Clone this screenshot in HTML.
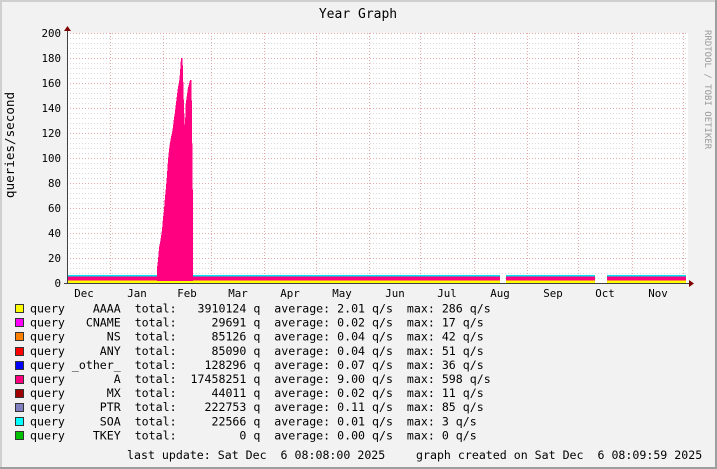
<!DOCTYPE html>
<html><head><meta charset="utf-8"><style>
html,body{margin:0;padding:0;background:#f2f2f2}
svg{display:block}
text{font-family:"DejaVu Sans Mono","Liberation Mono",monospace}
.pre{white-space:pre}
</style></head><body>
<svg width="717" height="469" viewBox="0 0 717 469" xmlns="http://www.w3.org/2000/svg">
<rect x="0" y="0" width="717" height="469" fill="#f2f2f2"/>
<rect x="0" y="0" width="717" height="2" fill="#cfcfcf"/>
<rect x="0" y="0" width="2" height="469" fill="#cfcfcf"/>
<rect x="0" y="467" width="717" height="2" fill="#9e9e9e"/>
<rect x="715" y="0" width="2" height="469" fill="#9e9e9e"/>
<rect x="67" y="33" width="621" height="250" fill="#ffffff"/>
<g stroke="#d8d8d8" stroke-width="1" stroke-dasharray="1,2" shape-rendering="crispEdges">
<path d="M67 38.5H688M67 43.5H688M67 48.5H688M67 53.5H688M67 63.5H688M67 68.5H688M67 73.5H688M67 78.5H688M67 88.5H688M67 93.5H688M67 98.5H688M67 103.5H688M67 113.5H688M67 118.5H688M67 123.5H688M67 128.5H688M67 138.5H688M67 143.5H688M67 148.5H688M67 153.5H688M67 163.5H688M67 168.5H688M67 173.5H688M67 178.5H688M67 188.5H688M67 193.5H688M67 198.5H688M67 203.5H688M67 213.5H688M67 218.5H688M67 223.5H688M67 228.5H688M67 238.5H688M67 243.5H688M67 248.5H688M67 253.5H688M67 263.5H688M67 268.5H688M67 273.5H688M67 278.5H688"/>
</g>
<g stroke="#e3a8a8" stroke-width="1" stroke-dasharray="1,2" shape-rendering="crispEdges">
<path d="M67 33.5H688M67 58.5H688M67 83.5H688M67 108.5H688M67 133.5H688M67 158.5H688M67 183.5H688M67 208.5H688M67 233.5H688M67 258.5H688"/>
<path d="M110.5 33V283M163.5 33V283M211.5 33V283M264.5 33V283M316.5 33V283M369.5 33V283M420.5 33V283M474.5 33V283M527.5 33V283M578.5 33V283M632.5 33V283M683.5 33V283"/>
</g>
<g shape-rendering="crispEdges">
<rect x="67" y="275" width="433" height="2" fill="#00e5ee"/>
<rect x="67" y="276.5" width="433" height="5" fill="#ff0080"/>
<rect x="67" y="280.5" width="433" height="2.5" fill="#ffff00"/>
<rect x="506" y="275" width="89" height="2" fill="#00e5ee"/>
<rect x="506" y="276.5" width="89" height="5" fill="#ff0080"/>
<rect x="506" y="280.5" width="89" height="2.5" fill="#ffff00"/>
<rect x="607" y="275" width="79" height="2" fill="#00e5ee"/>
<rect x="607" y="276.5" width="79" height="5" fill="#ff0080"/>
<rect x="607" y="280.5" width="79" height="2.5" fill="#ffff00"/>
<rect x="184" y="274" width="1.5" height="7" fill="#ffff00"/>
</g>
<polygon fill="#ff0080" shape-rendering="crispEdges" points="157,281 157,268 158,260 159,248 160,243 161,237 162,230 163,218 164,210 165,197 166,187 167,175 168,160 169,150 170,143 171,137 172,133 173,127 174,118 175,112 176,103 178,87 179,83 180,73 181,58 182.5,58 183,73 184,108 185,130 185.5,105 187,95 188,88 190,80 191.5,80 192,120 193,212 193,281"/>
<path d="M67.5 283V30M64 283.5H690" stroke="#404040" stroke-width="1" shape-rendering="crispEdges"/>
<polygon points="64,31 71,31 67.5,26" fill="#800000"/>
<polygon points="689,280 689,287 694,283.5" fill="#800000"/>
<g font-size="10.8" fill="#000" text-anchor="end">
<text x="61" y="37">200</text><text x="61" y="62">180</text><text x="61" y="87">160</text><text x="61" y="112">140</text><text x="61" y="137">120</text><text x="61" y="162">100</text><text x="61" y="187">80</text><text x="61" y="212">60</text><text x="61" y="237">40</text><text x="61" y="262">20</text><text x="61" y="287">0</text>
</g>
<g font-size="10.8" fill="#000" text-anchor="middle">
<text x="84" y="297">Dec</text><text x="137" y="297">Jan</text><text x="187" y="297">Feb</text><text x="238" y="297">Mar</text><text x="290" y="297">Apr</text><text x="342" y="297">May</text><text x="395" y="297">Jun</text><text x="447" y="297">Jul</text><text x="500" y="297">Aug</text><text x="553" y="297">Sep</text><text x="605" y="297">Oct</text><text x="658" y="297">Nov</text>
</g>
<text x="358" y="18" font-size="13" text-anchor="middle" fill="#000">Year Graph</text>
<text transform="translate(14,145) rotate(-90)" font-size="12.6" text-anchor="middle" fill="#000">queries/second</text>
<text transform="translate(705,30) rotate(90)" font-size="9" fill="#999">RRDTOOL / TOBI OETIKER</text>
<g shape-rendering="crispEdges" stroke="#333" stroke-width="1">
<rect x="15.5" y="304.5" width="8" height="8" fill="#ffff00"/>
<rect x="15.5" y="318.5" width="8" height="8" fill="#ff00ff"/>
<rect x="15.5" y="332.5" width="8" height="8" fill="#ff8000"/>
<rect x="15.5" y="347.5" width="8" height="8" fill="#ff0000"/>
<rect x="15.5" y="361.5" width="8" height="8" fill="#0000ff"/>
<rect x="15.5" y="375.5" width="8" height="8" fill="#ff0080"/>
<rect x="15.5" y="389.5" width="8" height="8" fill="#a00000"/>
<rect x="15.5" y="403.5" width="8" height="8" fill="#8080c0"/>
<rect x="15.5" y="417.5" width="8" height="8" fill="#00ffff"/>
<rect x="15.5" y="431.5" width="8" height="8" fill="#00c000"/>
</g>
<g font-size="11.6" fill="#000">
<text class="pre" x="30" y="312.5">query    AAAA  total:   3910124 q  average: 2.01 q/s  max: 286 q/s</text>
<text class="pre" x="30" y="326.6">query   CNAME  total:     29691 q  average: 0.02 q/s  max: 17 q/s</text>
<text class="pre" x="30" y="340.7">query      NS  total:     85126 q  average: 0.04 q/s  max: 42 q/s</text>
<text class="pre" x="30" y="354.8">query     ANY  total:     85090 q  average: 0.04 q/s  max: 51 q/s</text>
<text class="pre" x="30" y="368.9">query _other_  total:    128296 q  average: 0.07 q/s  max: 36 q/s</text>
<text class="pre" x="30" y="383">query       A  total:  17458251 q  average: 9.00 q/s  max: 598 q/s</text>
<text class="pre" x="30" y="397.1">query      MX  total:     44011 q  average: 0.02 q/s  max: 11 q/s</text>
<text class="pre" x="30" y="411.2">query     PTR  total:    222753 q  average: 0.11 q/s  max: 85 q/s</text>
<text class="pre" x="30" y="425.3">query     SOA  total:     22566 q  average: 0.01 q/s  max: 3 q/s</text>
<text class="pre" x="30" y="439.4">query    TKEY  total:         0 q  average: 0.00 q/s  max: 0 q/s</text>
<text class="pre" x="127" y="459">last update: Sat Dec  6 08:08:00 2025</text>
<text class="pre" x="416" y="459">graph created on Sat Dec  6 08:09:59 2025</text>
</g>
</svg>
</body></html>
